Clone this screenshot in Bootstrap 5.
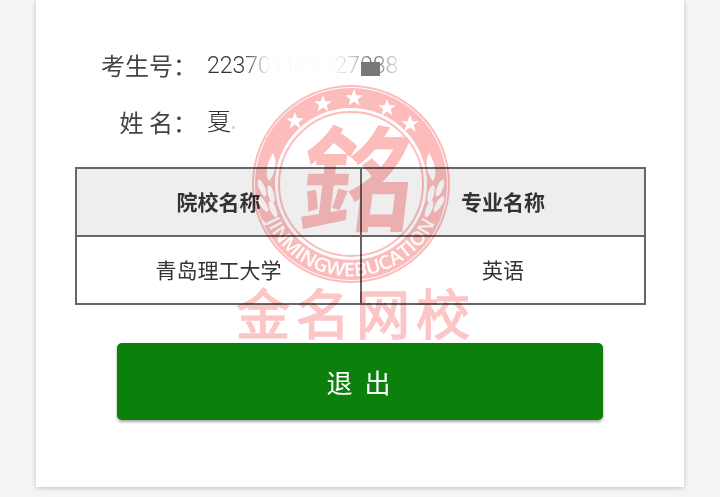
<!DOCTYPE html>
<html lang="zh-CN">
  <head>
    <meta charset="UTF-8" />
    <meta name="viewport" content="width=device-width, initial-scale=1.0" />
    <title>考生信息</title>
    <link
      rel="stylesheet"
      href="https://cdn.jsdelivr.net/npm/bootstrap@5.3.3/dist/css/bootstrap.min.css"
    />
    <style>
      html, body { height: 497px; overflow: hidden; }
      body {
        background: #f5f5f5;
        font-family: "Noto Sans CJK SC", sans-serif;
        color: #333;
        position: relative;
      }
      .sheet {
        margin: 0 36px;
        height: 487px;
        padding: 36px 38px 0 39px;
        background: #fff;
        box-shadow: 0 1px 5px rgba(0, 0, 0, 0.22);
      }
      .info-row { height: 57px; font-size: 24px; }
      .info-label { width: 122px; text-align: right; color: #444; }
      .info-value {
        margin-left: 10px;
        font-family: Roboto, "Noto Sans CJK SC", sans-serif;
        font-weight: 300;
        font-size: 24px;
        position: relative;
      }
      .id-digits {
        font-size: 23px;
        padding-top: 4px;
        -webkit-mask-image: linear-gradient(90deg, #000 36px, rgba(0,0,0,.03) 62px, rgba(0,0,0,.01) 125px, rgba(0,0,0,.25) 145px, rgba(0,0,0,.75) 165px, rgba(0,0,0,.15) 190px);
        mask-image: linear-gradient(90deg, #000 36px, rgba(0,0,0,.03) 62px, rgba(0,0,0,.01) 125px, rgba(0,0,0,.25) 145px, rgba(0,0,0,.75) 165px, rgba(0,0,0,.15) 190px);
      }
      .id-patch {
        position: absolute;
        left: 154px;
        top: 17px;
        width: 19px;
        height: 14px;
        background: #777;
      }
      .name-speck {
        position: absolute;
        left: 25px;
        top: 22px;
        width: 3px;
        height: 3px;
        border-radius: 50%;
        background: #ccc;
      }
      .result-table {
        table-layout: fixed;
        width: 571px;
        margin: 17px 0 0;
        border-collapse: collapse;
        --bs-table-bg: transparent;
      }
      .result-table th, .result-table td {
        height: 68px;
        padding: 0;
        border: 2px solid #666;
        text-align: center;
        vertical-align: middle;
        font-size: 21px;
        color: #333;
      }
      .result-table th { background: #eee; font-weight: 700; }
      .result-table td { font-weight: 400; }
      .quit-btn {
        display: block;
        width: 486px;
        height: 77px;
        margin: 38px 0 0 42px;
        padding: 0 0 0 9px;
        border: 0;
        border-radius: 5px;
        background: #0b800b;
        color: #fff;
        font-size: 26px;
        letter-spacing: 12px;
        box-shadow: 0 2px 3px rgba(0, 0, 0, 0.35);
      }
      .quit-btn:hover { background: #0b800b; color: #fff; }
      .stamp {
        position: absolute;
        left: 230px;
        top: 80px;
        mix-blend-mode: multiply;
        pointer-events: none;
      }
      .stamp-glyph { font-family: "Noto Sans CJK SC", sans-serif; font-weight: 700; }
      .stamp-arc { font-family: "Open Sans", sans-serif; font-weight: 600; }
    </style>
  </head>

  <body>
    <div class="sheet">
      <div class="info-row d-flex align-items-center">
        <div class="info-label">考生号：</div>
        <div class="info-value">
          <div class="id-digits">223701122327088</div>
          <div class="id-patch"></div>
        </div>
      </div>
      <div class="info-row d-flex align-items-center">
        <div class="info-label">姓 名：</div>
        <div class="info-value">夏<span class="name-speck"></span></div>
      </div>

      <table class="table result-table">
        <colgroup>
          <col style="width: 285px" />
          <col />
        </colgroup>
        <thead>
          <tr>
            <th>院校名称</th>
            <th>专业名称</th>
          </tr>
        </thead>
        <tbody>
          <tr>
            <td>青岛理工大学</td>
            <td>英语</td>
          </tr>
        </tbody>
      </table>

      <button type="button" class="btn quit-btn">退出</button>
    </div>

    <svg class="stamp" width="260" height="265" viewBox="0 0 260 265">
      <defs>
        <polygon id="star" points="0,-9 2.4,-2.8 8.8,-2.8 3.7,1.2 5.5,7.4 0,3.6 -5.5,7.4 -3.7,1.2 -8.8,-2.8 -2.4,-2.8" />
        <path id="arc" d="M15 137 A93 93 0 0 0 185 137" />
        <g id="wreath">
          <path d="M22 69 C15 80 14 92 18 97 C24 90 27 78 22 69Z" />
          <ellipse cx="11" cy="104" rx="3" ry="9" transform="rotate(-22 11 104)" />
          <ellipse cx="20" cy="110" rx="3" ry="9" transform="rotate(-15 20 110)" />
          <ellipse cx="12" cy="120" rx="3" ry="9" transform="rotate(-32 12 120)" />
          <ellipse cx="22" cy="125" rx="3" ry="9" transform="rotate(-22 22 125)" />
        </g>
      </defs>
      <g transform="translate(21 4)">
        <circle cx="100" cy="100" r="99" fill="#fcbcbc" />
        <circle cx="100" cy="100" r="96.5" fill="none" stroke="#fff" stroke-width="1" />
        <circle cx="100" cy="100" r="76" fill="#fff" />
        <circle cx="100" cy="100" r="72" fill="none" stroke="#fcbcbc" stroke-width="2" />
        <g fill="#fff">
          <use href="#star" x="44" y="37" />
          <use href="#star" x="72" y="20" />
          <use href="#star" x="103" y="14" />
          <use href="#star" x="136" y="24" />
          <use href="#star" x="159" y="40" />
          <use href="#wreath" />
          <use href="#wreath" transform="translate(200 0) scale(-1 1)" />
        </g>
        <text class="stamp-arc" font-size="19" fill="#fff">
          <textPath href="#arc" textLength="212" lengthAdjust="spacingAndGlyphs">JINMINGWEBUCATION</textPath>
        </text>
        <text class="stamp-glyph" x="0" y="0" font-size="114" text-anchor="middle" fill="#fcbcbc" transform="translate(102 138) skewX(-7)">銘</text>
      </g>
      <text class="stamp-glyph" x="6" y="255" font-size="54" letter-spacing="6" fill="#fdc6c6" style="font-weight:400" stroke="#fdc6c6" stroke-width="1.5">金名网校</text>
    </svg>

    <script src="https://cdn.jsdelivr.net/npm/bootstrap@5.3.3/dist/js/bootstrap.bundle.min.js"></script>
  </body>
</html>
